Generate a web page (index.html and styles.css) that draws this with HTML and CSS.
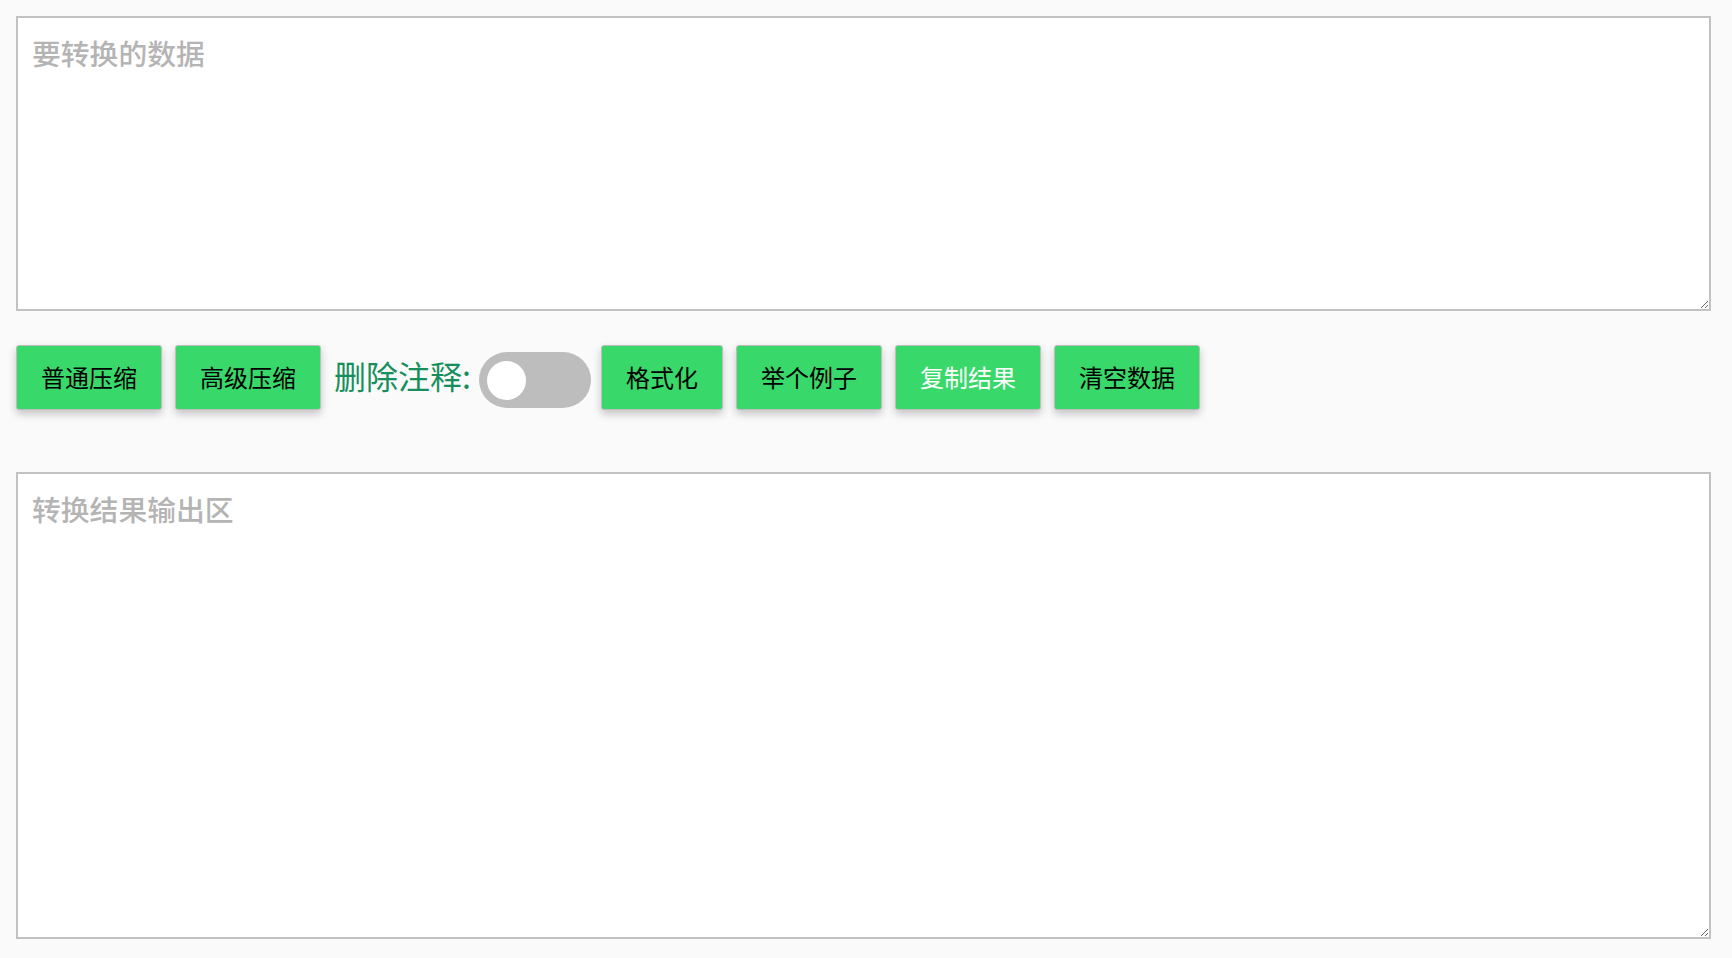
FILE: index.html
```html
<!DOCTYPE html>
<html lang="zh-CN">
<head>
    <meta charset="UTF-8">
    <meta name="viewport" content="width=device-width, initial-scale=1.0">
    <title>JSON 压缩格式化</title>
    <link rel="stylesheet" href="styles.css">
</head>
<body>
    <div class="page">
        <textarea class="data-box input-box" placeholder="要转换的数据"></textarea>

        <div class="toolbar">
            <button class="btn">普通压缩</button>
            <button class="btn">高级压缩</button>
            <span class="switch-label">删除注释:</span>
            <label class="switch">
                <input type="checkbox" id="removeComments">
                <span class="knob"></span>
            </label>
            <button class="btn">格式化</button>
            <button class="btn">举个例子</button>
            <button class="btn btn-copy">复制结果</button>
            <button class="btn">清空数据</button>
        </div>

        <textarea class="data-box output-box" placeholder="转换结果输出区"></textarea>
    </div>
</body>
</html>
```

FILE: styles.css
```css
body {
    margin: 0;
    background-color: #fafafa;
    font-family: "Noto Sans CJK SC", "Noto Sans", sans-serif;
    color: #000;
}
.page {
    padding: 16px 21px 0 16px;
}
.data-box {
    display: block;
    width: 100%;
    box-sizing: border-box;
    border: 2px solid #c2c2c2;
    background-color: #fff;
    padding: 14px 14px 12px;
    font-family: "Noto Sans CJK SC", "Noto Sans", sans-serif;
    font-size: 28.8px;
    color: #333;
    margin: 0;
}
.data-box::placeholder {
    color: #b4b4b4;
    font-weight: 500;
}
.input-box {
    height: 295px;
}
.output-box {
    height: 467px;
}
.toolbar {
    display: flex;
    align-items: center;
    margin: 34px 0 62px;
}
.btn {
    height: 65px;
    box-sizing: border-box;
    padding: 0 24px 3px;
    margin-right: 13px;
    background-color: #38d96a;
    border: 1px solid #bdbdbd;
    border-radius: 3px;
    box-shadow: 0 4px 8px rgba(0, 0, 0, 0.22);
    font-family: "Noto Sans CJK SC", "Noto Sans", sans-serif;
    font-size: 24px;
    color: #000;
    cursor: pointer;
}
.btn-copy {
    color: #fff;
}
.switch-label {
    font-size: 32px;
    color: #168f5c;
    margin-right: 8px;
    padding-bottom: 5px;
}
.switch {
    display: flex;
    align-items: center;
    width: 112px;
    height: 56px;
    box-sizing: border-box;
    padding: 0 8px;
    margin: 5px 10px 0 0;
    border-radius: 28px;
    background-color: #bdbdbd;
    cursor: pointer;
}
.switch input {
    display: none;
}
.knob {
    width: 39px;
    height: 39px;
    border-radius: 50%;
    background-color: #fff;
}
```
